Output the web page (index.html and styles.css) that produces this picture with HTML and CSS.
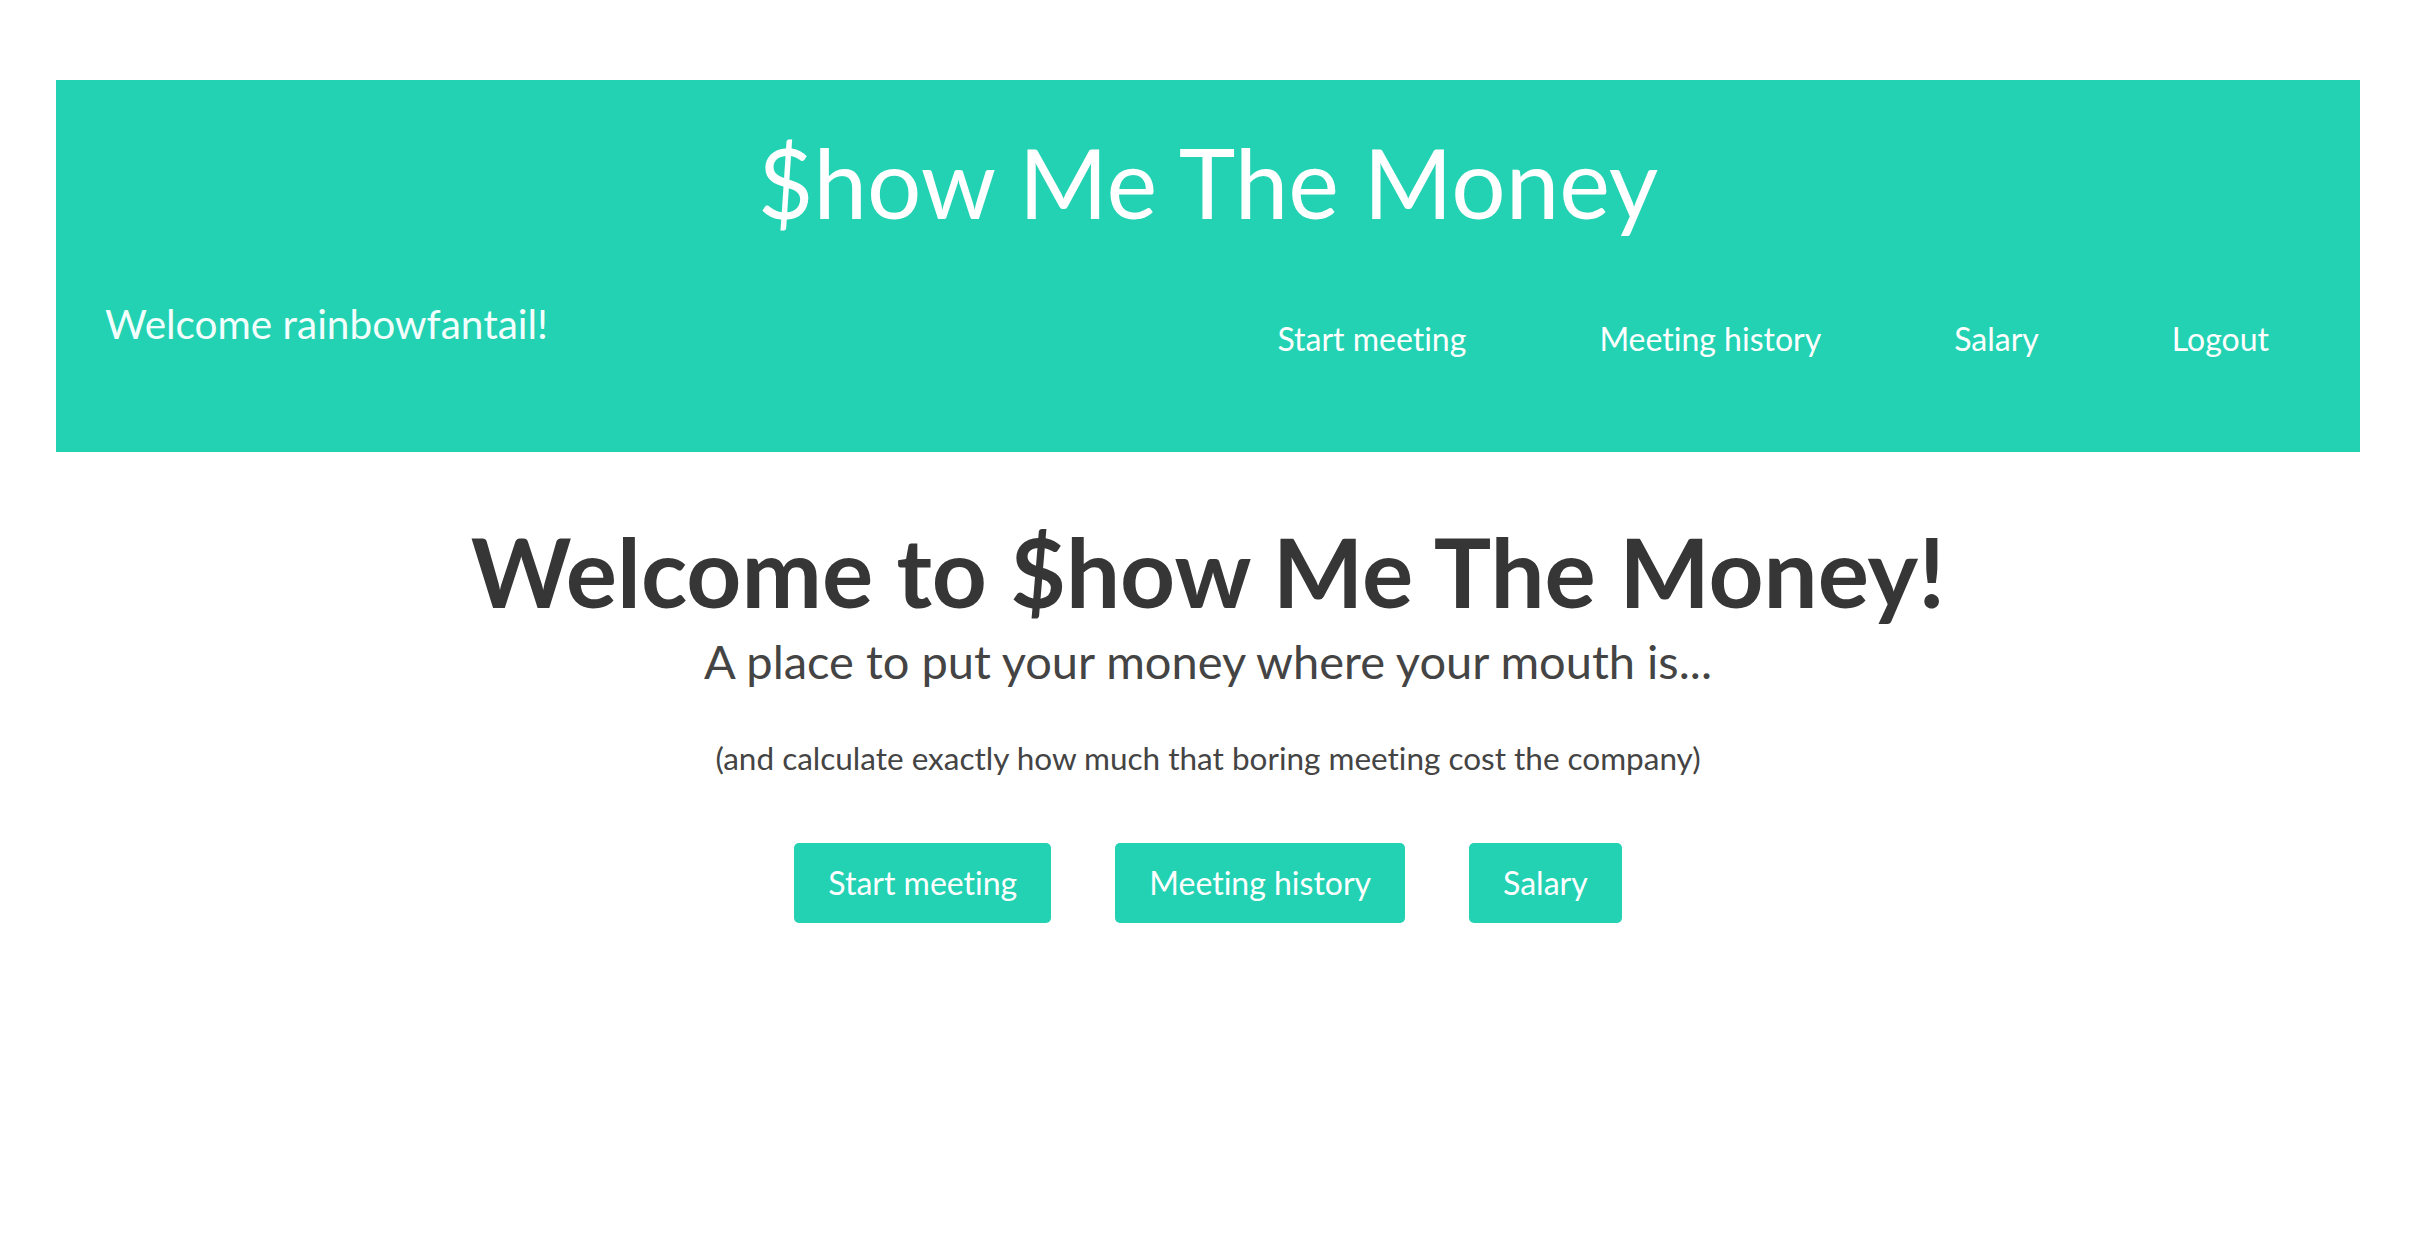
FILE: index.html
```html
<!DOCTYPE html>
<html lang="en">
<head>
<meta charset="utf-8">
<title>$how Me The Money</title>
<link rel="stylesheet" href="styles.css">
</head>
<body>
<div class="page">
  <header class="site-header">
    <h2 class="site-title">$how Me The Money</h2>
    <div class="header-row">
      <p class="welcome-user">Welcome rainbowfantail!</p>
      <nav class="main-nav">
        <a href="#">Start meeting</a>
        <a href="#">Meeting history</a>
        <a href="#">Salary</a>
        <a href="#">Logout</a>
      </nav>
    </div>
  </header>
  <main class="home">
    <h1 class="home-title">Welcome to $how Me The Money!</h1>
    <p class="home-sub">A place to put your money where your mouth is...</p>
    <p class="home-note">(and calculate exactly how much that boring meeting cost the company)</p>
    <div class="home-actions">
      <a class="btn" href="#">Start meeting</a>
      <a class="btn" href="#">Meeting history</a>
      <a class="btn" href="#">Salary</a>
    </div>
  </main>
</div>
</body>
</html>
```

FILE: styles.css
```css
html, body {
  margin: 0;
  padding: 0;
  background: #ffffff;
}
body {
  font-family: Lato, "Open Sans", "Liberation Sans", sans-serif;
  font-variant-ligatures: no-common-ligatures;
  font-feature-settings: "liga" 0;
  color: #333333;
}
.page {
  width: 2304px;
  margin: 0 0 0 56px;
  padding-top: 80px;
}
.site-header {
  background: #23d2b3;
  color: #ffffff;
  padding: 44px 0 93px;
}
.site-title {
  margin: 0;
  text-align: center;
  font-size: 96px;
  font-weight: 400;
  line-height: 1.2;
}
.header-row {
  display: flex;
  justify-content: space-between;
  align-items: flex-start;
  margin-top: 59px;
}
.welcome-user {
  margin: 0 0 0 49px;
  padding-top: 2px;
  font-size: 40.5px;
  font-weight: 400;
  line-height: 1.2;
  color: #f2fffc;
}
.main-nav {
  display: flex;
  gap: 133px;
  padding: 22px 91px 0 0;
}
.main-nav a {
  color: #ffffff;
  text-decoration: none;
  font-size: 32px;
  font-weight: 400;
  line-height: 1.2;
}
.home {
  text-align: center;
  padding-top: 61px;
}
.home-title {
  margin: 0;
  font-size: 96px;
  font-weight: 700;
  line-height: 1.2;
  color: #363636;
}
.home-sub {
  margin: 5px 0 0;
  font-size: 47px;
  font-weight: 400;
  line-height: 1.2;
  color: #444444;
}
.home-note {
  margin: 51px 0 0;
  font-size: 31.5px;
  font-weight: 400;
  line-height: 1.2;
  color: #444444;
}
.home-actions {
  display: flex;
  justify-content: center;
  gap: 64px;
  margin-top: 65px;
}
.btn {
  display: inline-block;
  background: #23d2b3;
  color: #ffffff;
  text-decoration: none;
  font-size: 32px;
  font-weight: 400;
  line-height: 38px;
  padding: 21px 34px;
  border-radius: 5px;
}
```
